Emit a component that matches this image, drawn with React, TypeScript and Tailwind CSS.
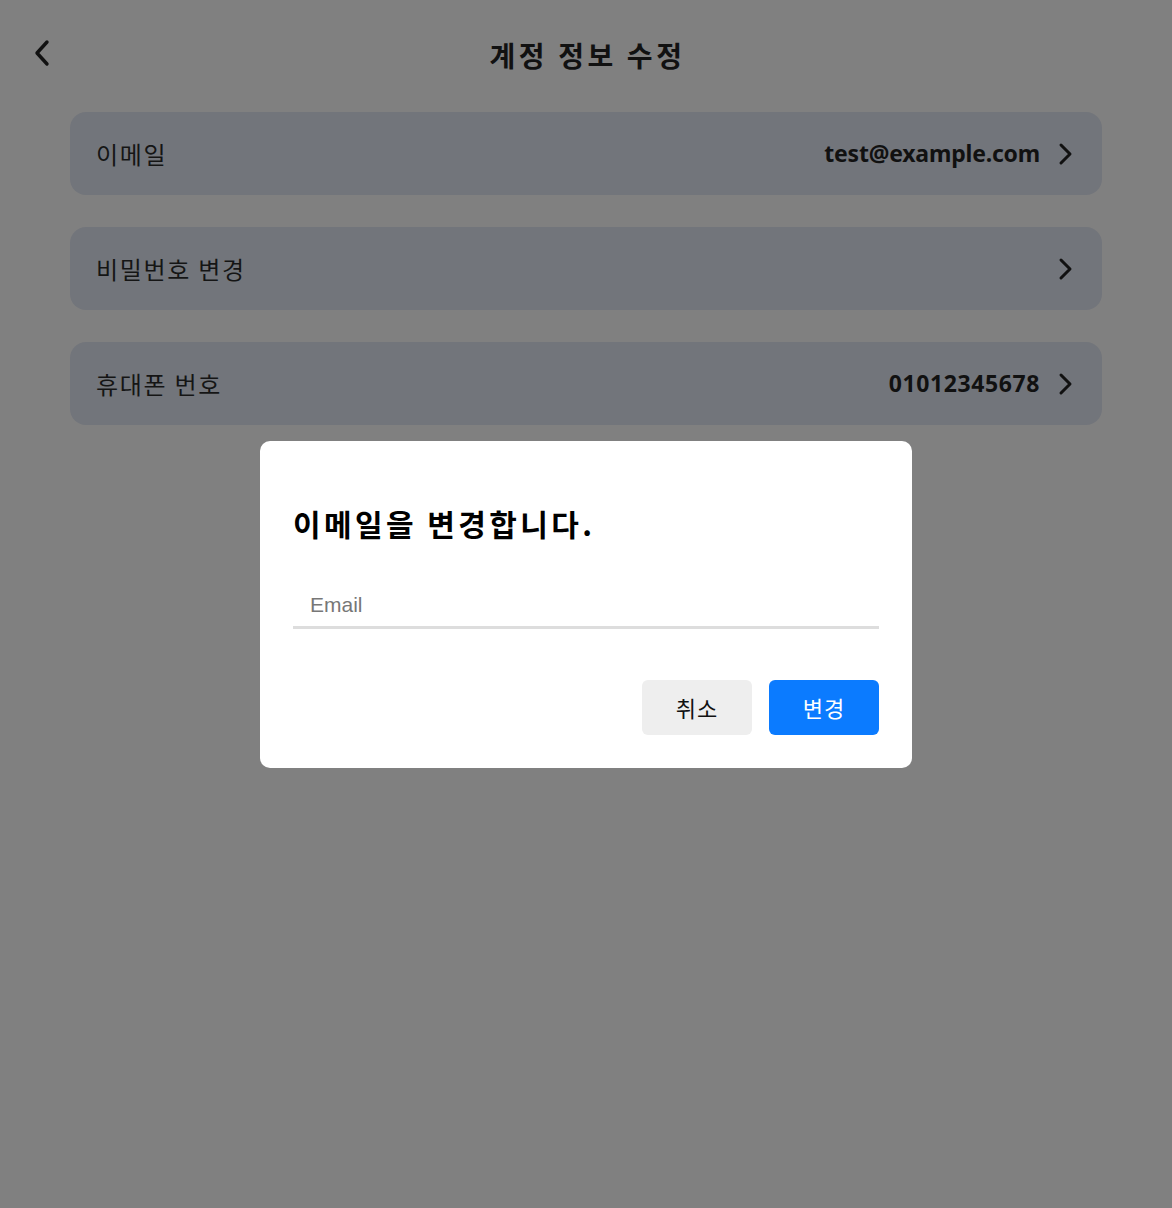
import React from "react";

const KR = { fontFamily: '"Noto Sans CJK KR", "Noto Sans", sans-serif' };
const LAT = { fontFamily: '"Noto Sans", "Noto Sans CJK KR", sans-serif' };

function ChevronRight() {
  return (
    <svg width="16" height="24" viewBox="0 0 16 24" className="shrink-0">
      <polyline points="3,3 12,12 3,21" fill="none" stroke="#111" strokeWidth="3" strokeLinecap="round" strokeLinejoin="round" />
    </svg>
  );
}

function Row({ label, value, digits }: { label: string; value?: string; digits?: boolean }) {
  return (
    <div className="flex h-[83px] items-center justify-between rounded-[16px] bg-[#72757b] pl-[26px] pr-[28px]">
      <span className="text-[24px] text-[#151515] tracking-[1.7px]" style={KR}>{label}</span>
      <div className="flex items-center gap-[18px]">
        {value && (
          <span
            className={digits ? "text-[23px] font-bold text-[#111] tracking-[0.6px]" : "text-[23px] font-bold text-[#111] tracking-[-0.2px]"}
            style={LAT}
          >
            {value}
          </span>
        )}
        <ChevronRight />
      </div>
    </div>
  );
}

export default function App() {
  return (
    <div className="relative h-[1208px] w-full overflow-hidden bg-[#808080]" style={KR}>
      <header className="relative flex h-[110px] items-center justify-center">
        <button className="absolute left-[32px] top-[38px]">
          <svg width="20" height="30" viewBox="0 0 20 30">
            <polyline points="15,4 5,15 15,26" fill="none" stroke="#111" strokeWidth="3.4" strokeLinecap="round" strokeLinejoin="round" />
          </svg>
        </button>
        <h1 className="text-[28px] font-bold text-[#111] tracking-[3.6px] pl-[3px]" style={KR}>계정 정보 수정</h1>
      </header>
      <div className="mt-[2px] flex flex-col gap-[32px] px-[70px]">
        <Row label="이메일" value="test@example.com" />
        <Row label="비밀번호 변경" />
        <Row label="휴대폰 번호" value="01012345678" digits />
      </div>

      <div className="absolute inset-0 flex items-center justify-center">
        <div className="w-[652px] rounded-[10px] bg-white px-[33px] pb-[33px] pt-[59px]">
          <h2 className="text-[30px] font-bold leading-[46px] text-black tracking-[3.4px]" style={KR}>이메일을 변경합니다.</h2>
          <div className="mt-[34px] flex h-[49px] items-center border-b-[3px] border-[#dddddd] pl-[17px] pt-[4px]">
            <span className="text-[21px] text-[#777777]" style={{ fontFamily: '"Liberation Sans", Arial, sans-serif' }}>Email</span>
          </div>
          <div className="mt-[51px] flex justify-end gap-[17px]">
            <button className="flex h-[55px] w-[110px] items-center justify-center rounded-[6px] bg-[#eeeeee] text-[22px] text-[#111] tracking-[1px]" style={KR}>취소</button>
            <button className="flex h-[55px] w-[110px] items-center justify-center rounded-[6px] bg-[#0b7bff] text-[22px] text-white tracking-[1px]" style={KR}>변경</button>
          </div>
        </div>
      </div>
    </div>
  );
}
